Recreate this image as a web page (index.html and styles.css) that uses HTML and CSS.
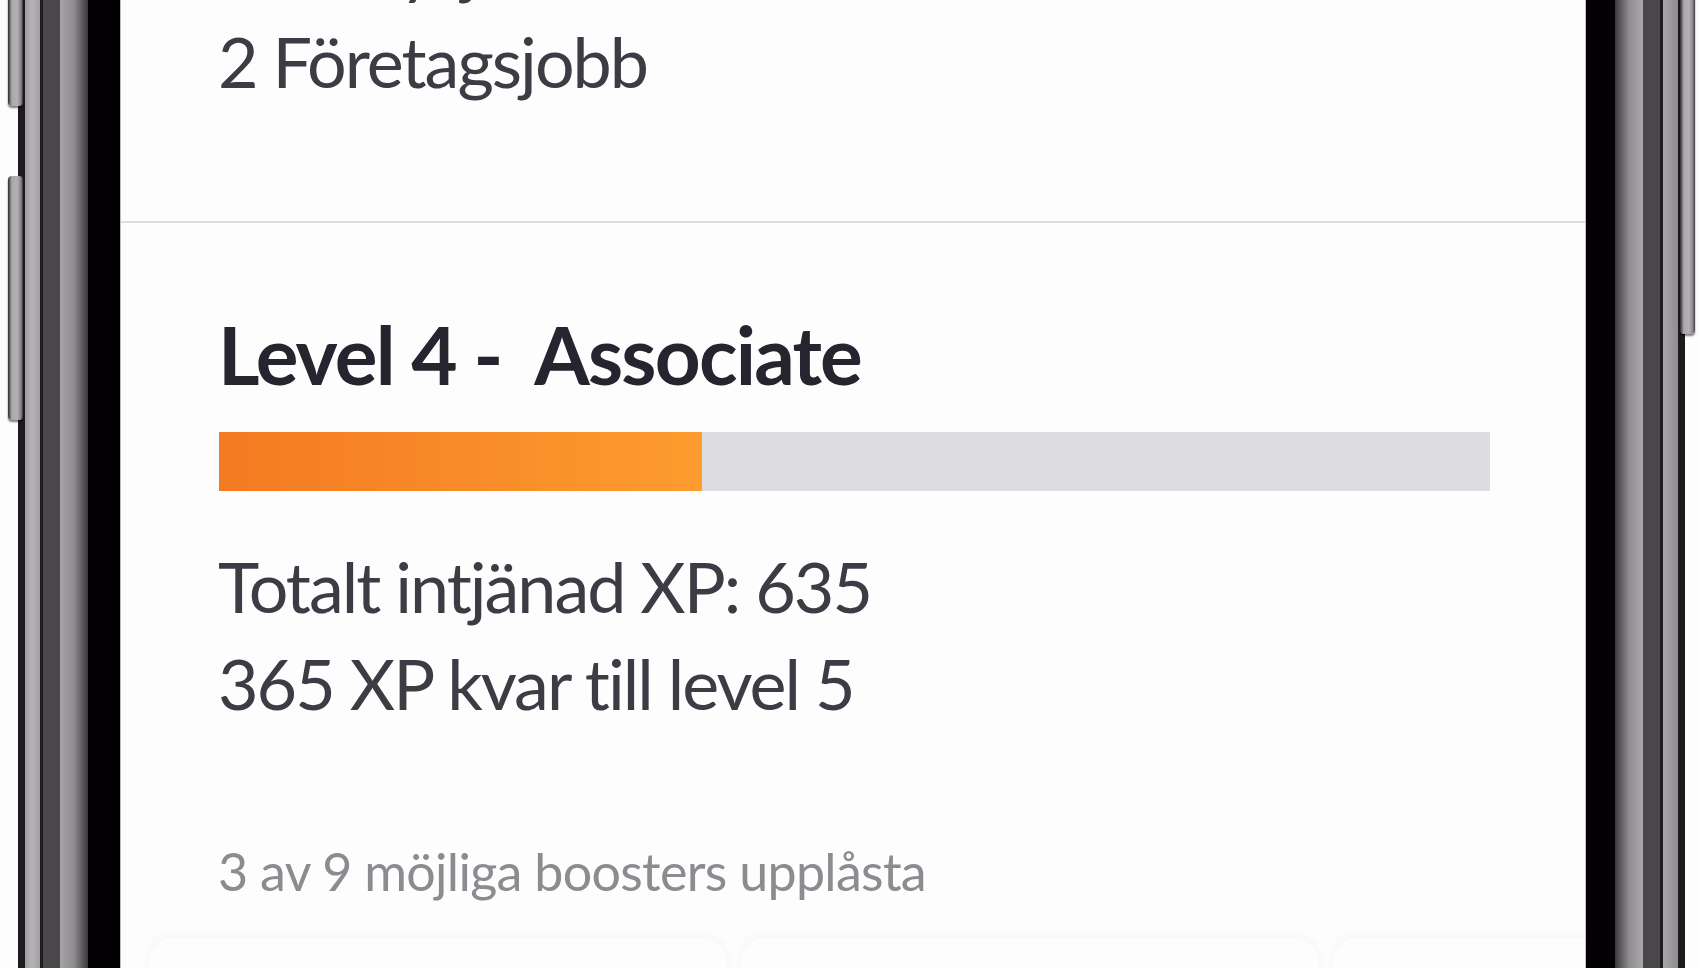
FILE: index.html
```html
<!DOCTYPE html>
<html lang="sv">
<head>
<meta charset="UTF-8">
<meta name="viewport" content="width=device-width, initial-scale=1.0">
<title>Min profil</title>
<link rel="stylesheet" href="styles.css">
</head>
<body>
  <div class="phone">
    <div class="frame frame-left">
      <div class="side-btn btn-top"></div>
      <div class="side-btn btn-volume"></div>
    </div>

    <div class="screen">
      <div class="jobs">
        <p class="stat">2 Analysjobb</p>
        <p class="stat">2 Företagsjobb</p>
      </div>

      <div class="level">
        <h2 class="level-title">Level 4 -&nbsp; Associate</h2>
        <div class="xp-bar">
          <div class="xp-fill" style="width: 38%;"></div>
        </div>
        <p class="stat">Totalt intjänad XP: 635</p>
        <p class="stat">365 XP kvar till level 5</p>
        <p class="boost-count">3 av 9 möjliga boosters upplåsta</p>
      </div>

      <div class="boosters">
        <div class="booster"></div>
        <div class="booster"></div>
        <div class="booster"></div>
      </div>
    </div>

    <div class="frame frame-right">
      <div class="side-btn btn-power"></div>
    </div>
  </div>
</body>
</html>
```
FILE: styles.css
```css
body {
  margin: 0;
  padding: 0;
  background-color: #fdfdfd;
  font-family: Lato, "Open Sans", sans-serif;
  overflow: hidden;
}
.phone {
  display: flex;
  height: 968px;
}
.frame {
  position: relative;
  flex-shrink: 0;
}
.frame-left {
  width: 121px;
  background: linear-gradient(to right,
    #fdfdfd 0 18px,
    #1c1a1c 18px 25px,
    #9c9a9c 25px, #b6b4b6 32px, #a2a0a2 40px,
    #1e1c1e 40px 43px,
    #49474a 43px 60px,
    #a6a4a6 60px, #8e8c8e 74px, #3a383a 88px,
    #030103 88px 120px,
    #bdbcbf 120px 121px);
}
.frame-right {
  width: 115px;
  background: linear-gradient(to right,
    #c4c3c6 0 1px,
    #030103 1px 30px,
    #3a383a 30px, #8e8c8e 44px, #aaa8aa 58px,
    #49474a 58px 75px,
    #1e1c1e 75px 78px,
    #a8a6a8 78px, #8e8c8e 93px,
    #1c1a1c 93px 100px,
    #fdfdfd 100px);
}
.side-btn {
  position: absolute;
  width: 15px;
  background: linear-gradient(to right, #2c2a2c, #a9a7a9 25%, #b3b1b3 60%, #8a888a 85%, #3a383a);
  border-radius: 4px;
  box-shadow: 0 2px 2px rgba(0, 0, 0, 0.5);
}
.btn-top {
  left: 8px;
  top: -20px;
  height: 126px;
}
.btn-volume {
  left: 8px;
  top: 176px;
  height: 244px;
}
.btn-power {
  left: 95px;
  top: -20px;
  height: 354px;
}
.screen {
  flex: 1;
  background-color: #fefdfe;
  overflow: hidden;
}
p, h2 {
  margin: 0;
}
.stat {
  font-size: 70px;
  line-height: 97px;
  letter-spacing: -2px;
  color: #3d3c45;
  white-space: nowrap;
}
.jobs {
  margin-top: -84px;
  padding: 0 99px 111px 97px;
  border-bottom: 2px solid #dedce1;
}
.level {
  padding: 83px 95px 0 97px;
}
.level-title {
  font-size: 80px;
  line-height: 96px;
  font-weight: 700;
  letter-spacing: -1.8px;
  color: #25242f;
  white-space: nowrap;
}
.xp-bar {
  height: 59px;
  margin: 30px 0 47px 1px;
  background-color: #dddce1;
}
.xp-fill {
  height: 100%;
  background: linear-gradient(to right, #f47a21, #fd9c2f);
}
.boost-count {
  margin-top: 107px;
  font-size: 52px;
  line-height: 64px;
  letter-spacing: -0.7px;
  color: #8c8b90;
  white-space: nowrap;
}
.boosters {
  display: flex;
  gap: 14px;
  margin-top: 35px;
  padding-left: 28px;
}
.booster {
  flex-shrink: 0;
  width: 578px;
  height: 120px;
  border-radius: 24px;
  background-color: #fefdfe;
  box-shadow: 0 -2px 12px rgba(40, 30, 60, 0.04);
}
```
